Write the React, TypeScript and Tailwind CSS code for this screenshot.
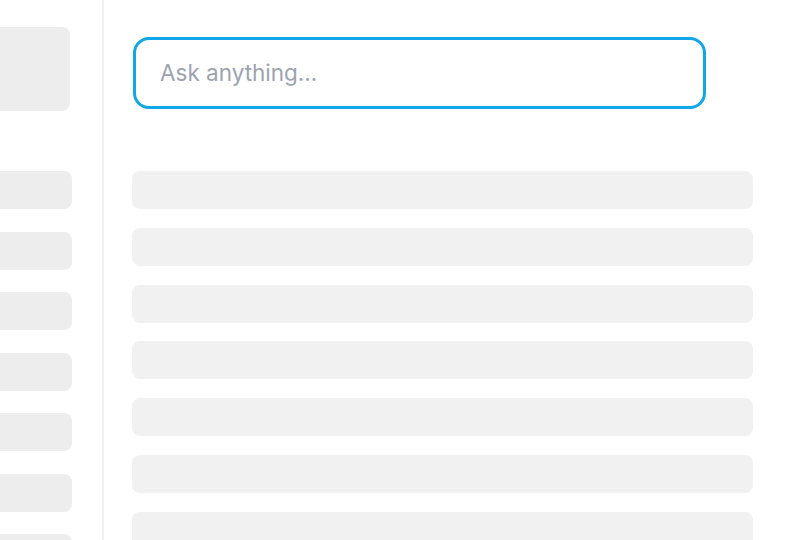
const sideRows = [0, 1, 2, 3, 4, 5, 6];
const mainRows = [0, 1, 2, 3, 4, 5, 6];

export default function App() {
  return (
    <div className="flex h-[540px] w-[800px] overflow-hidden bg-white font-['Inter','Liberation_Sans',sans-serif]">
      {/* Sidebar */}
      <aside className="flex w-[104px] shrink-0 flex-col overflow-hidden border-r-2 border-[#efefef] pt-[27px]">
        <div className="-ml-3 h-[84px] w-[82px] shrink-0 rounded-lg bg-[#ededed]" />
        <div className="mt-[60px] flex shrink-0 flex-col gap-[22.5px]">
          {sideRows.map((i) => (
            <div key={i} className="-ml-3 h-[38px] w-[84px] shrink-0 rounded-lg bg-[#ededed]" />
          ))}
        </div>
      </aside>

      {/* Main */}
      <main className="flex flex-1 flex-col overflow-hidden pl-[28px] pt-[37px]">
        <div className="ml-px flex h-[72px] w-[573px] shrink-0 items-center rounded-[16px] border-[3px] border-[#10a6e8] px-[24px]">
          <input
            type="text"
            placeholder="Ask anything..."
            className="w-full bg-transparent text-[22.5px] text-gray-700 outline-none placeholder:text-[#9ca3af]"
          />
        </div>

        <div className="mt-[62px] flex shrink-0 flex-col gap-[18.8px]">
          {mainRows.map((i) => (
            <div key={i} className="h-[38px] w-[621px] shrink-0 rounded-lg bg-[#f1f1f1]" />
          ))}
        </div>
      </main>
    </div>
  );
}
